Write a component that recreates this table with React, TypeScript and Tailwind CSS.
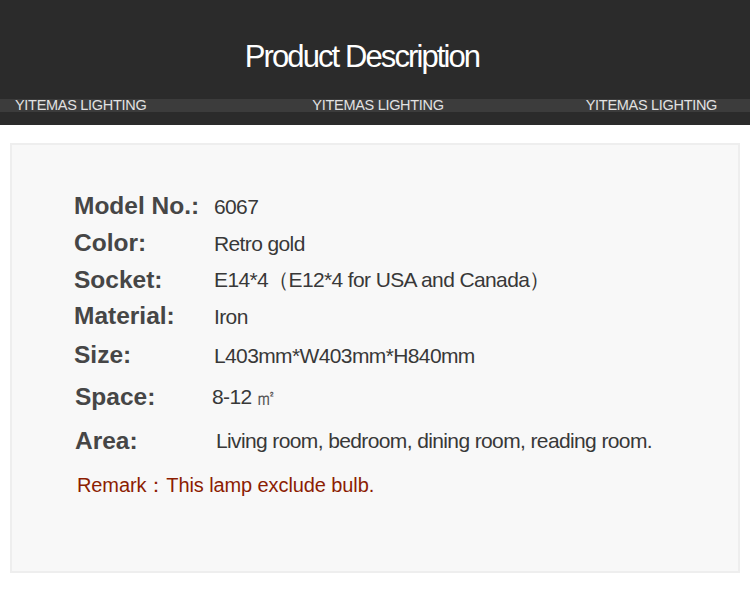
const rows = [
  { label: 'Model No.:', value: '6067', h: 'h-[37px]' },
  { label: 'Color:', value: 'Retro gold', h: 'h-[37px]' },
  { label: 'Socket:', value: 'E14*4（E12*4 for USA and Canada）', h: 'h-[36px]' },
  { label: 'Material:', value: 'Iron', h: 'h-[37px]' },
  { label: 'Size:', value: 'L403mm*W403mm*H840mm', h: 'h-[41px]' },
];

export default function App() {
  return (
    <div className="w-[750px] h-[590px] bg-white font-['Liberation_Sans',Arial,sans-serif] overflow-hidden">
      {/* Header band */}
      <div className="h-[125px] bg-[#2b2b2b] flex flex-col">
        <div className="h-[99px] flex items-center justify-center pt-[13px] pr-[26px]">
          <h1 className="text-[31px] text-white tracking-[-1.9px] leading-none">Product Description</h1>
        </div>
        <div className="h-[13px] bg-[#3c3c3c] flex items-center text-[14.5px] text-[#e2e2e2] tracking-[-0.3px] leading-none">
          <span className="ml-[15px]">YITEMAS LIGHTING</span>
          <span className="ml-[166px]">YITEMAS LIGHTING</span>
          <span className="ml-[142px]">YITEMAS LIGHTING</span>
        </div>
      </div>

      {/* Spec card */}
      <div className="mx-[10px] mt-[18px] w-[730px] h-[430px] bg-[#f8f8f8] border-2 border-[#eeeeee] pt-[43px] pl-[62px]">
        {rows.map((r) => (
          <div key={r.label} className={`flex items-center ${r.h}`}>
            <span className="w-[140px] text-[24.5px] font-bold text-[#464646]">{r.label}</span>
            <span className="text-[21px] text-[#383838] tracking-[-0.62px]">{r.value}</span>
          </div>
        ))}
        <div className="flex items-center h-[42px]">
          <span className="w-[138px] text-[24.5px] font-bold text-[#464646] pl-[1px]">Space:</span>
          <span className="text-[21px] text-[#383838] tracking-[-0.62px]">8-12</span>
          <span className="ml-[3px] text-[22px] text-[#555] font-['Liberation_Serif',serif]">㎡</span>
        </div>
        <div className="flex items-center h-[46px]">
          <span className="w-[142px] text-[24.5px] font-bold text-[#464646] pl-[1px]">Area:</span>
          <span className="text-[21px] text-[#383838] tracking-[-0.62px]">Living room, bedroom, dining room, reading room.</span>
        </div>
        <div className="flex items-center h-[42px] pl-[3px] text-[20px] text-[#8c1d02] tracking-[-0.1px]">
          <span>Remark：</span>
          <span>This lamp exclude bulb.</span>
        </div>
      </div>
    </div>
  );
}
